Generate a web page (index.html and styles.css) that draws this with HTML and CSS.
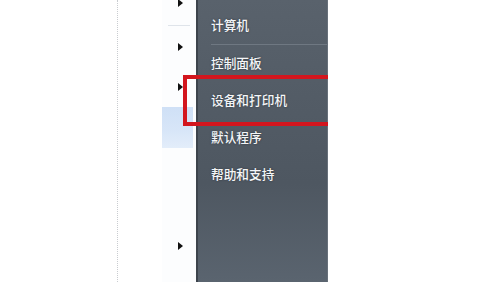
FILE: index.html
```html
<!DOCTYPE html>
<html lang="zh-CN">
<head>
  <meta charset="UTF-8">
  <title>开始菜单</title>
  <link rel="stylesheet" href="styles.css">
</head>
<body>
<div class="page">
  <div class="guide"></div>
  <div class="menu">
    <div class="side">
      <span class="arrow arrow-top"></span>
      <span class="sep"></span>
      <span class="arrow arrow-2"></span>
      <span class="arrow arrow-3"></span>
      <span class="hl"></span>
      <span class="arrow arrow-4"></span>
    </div>
    <ul class="links">
      <li class="first">计算机</li>
      <li class="line"></li>
      <li>控制面板</li>
      <li>设备和打印机</li>
      <li>默认程序</li>
      <li>帮助和支持</li>
    </ul>
    <div class="mark"></div>
  </div>
</div>
</body>
</html>
```

FILE: styles.css
```css
* {
  padding: 0;
  margin: 0;
  list-style: none;
  border: 0;
}

body {
  background: #fff;
  font-family: "Noto Sans CJK SC", "Noto Sans", sans-serif;
}

.page {
  display: flex;
  height: 282px;
  overflow: hidden;
}

.guide {
  width: 117px;
  height: 282px;
  border-right: 1px dotted #c9ccd0;
  margin-right: 44px;
}

.menu {
  display: flex;
  position: relative;
  height: 282px;
}

.side {
  width: 34px;
  background: #fcfdfe;
  display: flex;
  flex-direction: column;
  padding-left: 16px;
  box-sizing: border-box;
}

.arrow {
  display: block;
  width: 0;
  height: 0;
  border-top: 4px solid transparent;
  border-bottom: 4px solid transparent;
  border-left: 5px solid #111;
}

.arrow-top {
  margin-top: -1px;
}

.sep {
  display: block;
  width: 22px;
  height: 1px;
  margin: 18px 0 0 -10px;
  background: #dfe4ea;
}

.arrow-2 {
  margin-top: 17px;
}

.arrow-3 {
  margin-top: 32px;
}

.hl {
  display: block;
  width: 31px;
  height: 41px;
  margin: 16px 0 0 -16px;
  background: linear-gradient(#cfe0f6, #d8e6f8 60%, #e3edfa);
}

.arrow-4 {
  margin-top: 94px;
}

.links {
  width: 132px;
  box-sizing: border-box;
  border-left: 2px solid #3d444c;
  border-right: 1px solid #68717b;
  background: linear-gradient(#59626c, #525b65 40%, #4e5761 65%, #5a646f);
  padding: 16px 0 0 13px;
  color: #f4f6f8;
  font-size: 12.7px;
  font-weight: 500;
  line-height: 18px;
  text-shadow: 0 0 2px #2f353c;
}

.links li {
  height: 37px;
}

.links li.first {
  height: 28px;
}

.links li.line {
  height: 1px;
  background: #6f7882;
  margin-bottom: 9px;
}

.mark {
  position: absolute;
  left: 21px;
  top: 75px;
  width: 145px;
  height: 51px;
  box-sizing: border-box;
  border: 4px solid #d3161e;
  border-right: 0;
}
```
